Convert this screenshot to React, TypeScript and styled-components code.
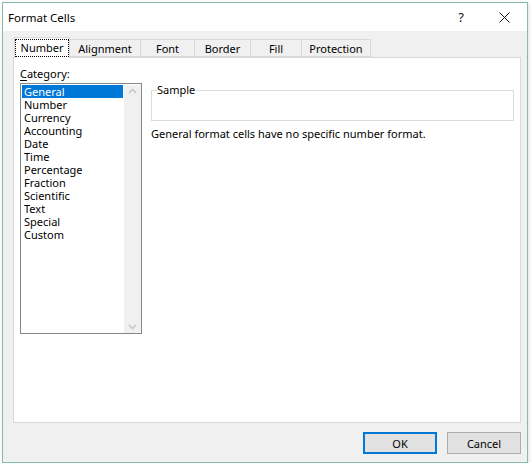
import styled, { createGlobalStyle } from "styled-components";

const GlobalStyle = createGlobalStyle`
  html, body {
    margin: 0;
    padding: 0;
    background: #ffffff;
  }
  body {
    font-family: "Noto Sans", "Open Sans", sans-serif;
    font-size: 11px;
    color: #000000;
  }
`

const Window = styled.div`
  margin: 2px 0 0 2px;
  width: 524px;
  height: 459px;
  border: 1px solid #86bda8;
  background: #f0f0f0;
  display: flex;
  flex-direction: column;
  box-shadow: 1px 1px 4px rgba(0, 0, 0, 0.12);
`

const TitleBar = styled.div`
  height: 28px;
  background: #ffffff;
  display: flex;
  align-items: center;
  padding-left: 5px;
`

const Title = styled.span`
  flex: 1;
  font-size: 11.5px;
`

const CaptionButton = styled.div<{ $width: number }>`
  width: ${p => p.$width}px;
  height: 28px;
  display: flex;
  align-items: center;
  justify-content: center;
  font-size: 13px;
  color: #111111;
`

const Body = styled.div`
  flex: 1;
  display: flex;
  flex-direction: column;
  padding: 6px 6px 8px 10px;
`

const TabStrip = styled.div`
  display: flex;
  padding-left: 1px;
  height: 20px;
  align-items: flex-end;
`

const Tab = styled.div<{ $width: number; $active?: boolean }>`
  box-sizing: border-box;
  width: ${p => p.$width}px;
  height: ${p => (p.$active ? 21 : 18)}px;
  margin-bottom: ${p => (p.$active ? -1 : 0)}px;
  margin-right: -1px;
  border: 1px solid #d9d9d9;
  border-bottom: ${p => (p.$active ? "none" : "1px solid #d9d9d9")};
  background: ${p => (p.$active ? "#ffffff" : "#f0f0f0")};
  position: relative;
  z-index: ${p => (p.$active ? 1 : 0)};
  display: flex;
  align-items: center;
  justify-content: center;
  font-size: 11px;
`

const FocusLabel = styled.span`
  outline: 1px dotted #000000;
  outline-offset: 0;
  padding: 0 5px;
  line-height: 16px;
`

const Panel = styled.div`
  flex: 1;
  background: #ffffff;
  border: 1px solid #d9d9d9;
  display: flex;
  padding: 8px 6px 0 6px;
  gap: 9px;
`

const LeftColumn = styled.div`
  display: flex;
  flex-direction: column;
`

const FieldLabel = styled.div`
  height: 17px;
  line-height: 16px;
  font-size: 11px;
  u {
    text-decoration: underline;
    text-underline-offset: 2px;
  }
`

const ListBox = styled.div`
  box-sizing: content-box;
  width: 119px;
  height: 248px;
  border: 1px solid #828790;
  display: flex;
  padding: 1px 0 0 1px;
`

const Items = styled.div`
  flex: 1;
  display: flex;
  flex-direction: column;
`

const Item = styled.div<{ $selected?: boolean }>`
  height: 13px;
  line-height: 13px;
  padding-left: 2px;
  font-size: 11px;
  background: ${p => (p.$selected ? "#0078d7" : "transparent")};
  color: ${p => (p.$selected ? "#ffffff" : "#000000")};
  margin-right: 1px;
`

const ScrollBar = styled.div`
  width: 17px;
  background: #f0f0f0;
  display: flex;
  flex-direction: column;
  justify-content: space-between;
  align-items: center;
  padding: 3px 0;
`

const RightColumn = styled.div`
  flex: 1;
  display: flex;
  flex-direction: column;
  padding-top: 17px;
`

const SampleBox = styled.fieldset`
  margin: 0;
  height: 38px;
  box-sizing: border-box;
  border: 1px solid #dcdcdc;
  padding: 0 6px;
  legend {
    padding: 0 1px 0 0;
    margin-left: -1px;
    font-size: 11px;
    line-height: 14px;
  }
`

const Description = styled.div`
  margin-top: 6px;
  font-size: 11px;
  line-height: 14px;
`

const ButtonRow = styled.div`
  display: flex;
  justify-content: flex-end;
  gap: 10px;
  padding-top: 9px;
`

const Button = styled.div<{ $default?: boolean }>`
  box-sizing: border-box;
  width: 74px;
  height: 22px;
  background: #e1e1e1;
  border: ${p => (p.$default ? "2px solid #0078d7" : "1px solid #adadad")};
  display: flex;
  align-items: center;
  justify-content: center;
  font-size: 11px;
`

const Chevron = ({ up }: { up?: boolean }) => (
  <svg width="9" height="6" viewBox="0 0 9 6">
    <path
      d={up ? "M1 5 L4.5 1.5 L8 5" : "M1 1 L4.5 4.5 L8 1"}
      fill="none"
      stroke="#c2c2c2"
      strokeWidth="1.3"
    />
  </svg>
)

const categories = [
  "General",
  "Number",
  "Currency",
  "Accounting",
  "Date",
  "Time",
  "Percentage",
  "Fraction",
  "Scientific",
  "Text",
  "Special",
  "Custom",
]

const tabs: { label: string; width: number }[] = [
  { label: "Number", width: 56 },
  { label: "Alignment", width: 72 },
  { label: "Font", width: 55 },
  { label: "Border", width: 57 },
  { label: "Fill", width: 52 },
  { label: "Protection", width: 70 },
]

const App = () => {
  return (
    <>
      <GlobalStyle />
      <Window>
        <TitleBar>
          <Title>Format Cells</Title>
          <CaptionButton $width={40}>?</CaptionButton>
          <CaptionButton $width={46}>
            <svg width="11" height="11" viewBox="0 0 11 11">
              <path d="M0.5 0.5 L10.5 10.5 M10.5 0.5 L0.5 10.5" stroke="#111" strokeWidth="1" />
            </svg>
          </CaptionButton>
        </TitleBar>
        <Body>
          <TabStrip>
            {tabs.map((t, i) => (
              <Tab key={t.label} $width={t.width} $active={i === 0}>
                {i === 0 ? <FocusLabel>{t.label}</FocusLabel> : t.label}
              </Tab>
            ))}
          </TabStrip>
          <Panel>
            <LeftColumn>
              <FieldLabel>
                <u>C</u>ategory:
              </FieldLabel>
              <ListBox>
                <Items>
                  {categories.map((c, i) => (
                    <Item key={c} $selected={i === 0}>
                      {c}
                    </Item>
                  ))}
                </Items>
                <ScrollBar>
                  <Chevron up />
                  <Chevron />
                </ScrollBar>
              </ListBox>
            </LeftColumn>
            <RightColumn>
              <SampleBox>
                <legend>Sample</legend>
              </SampleBox>
              <Description>General format cells have no specific number format.</Description>
            </RightColumn>
          </Panel>
          <ButtonRow>
            <Button $default>OK</Button>
            <Button>Cancel</Button>
          </ButtonRow>
        </Body>
      </Window>
    </>
  )
}

export default App
